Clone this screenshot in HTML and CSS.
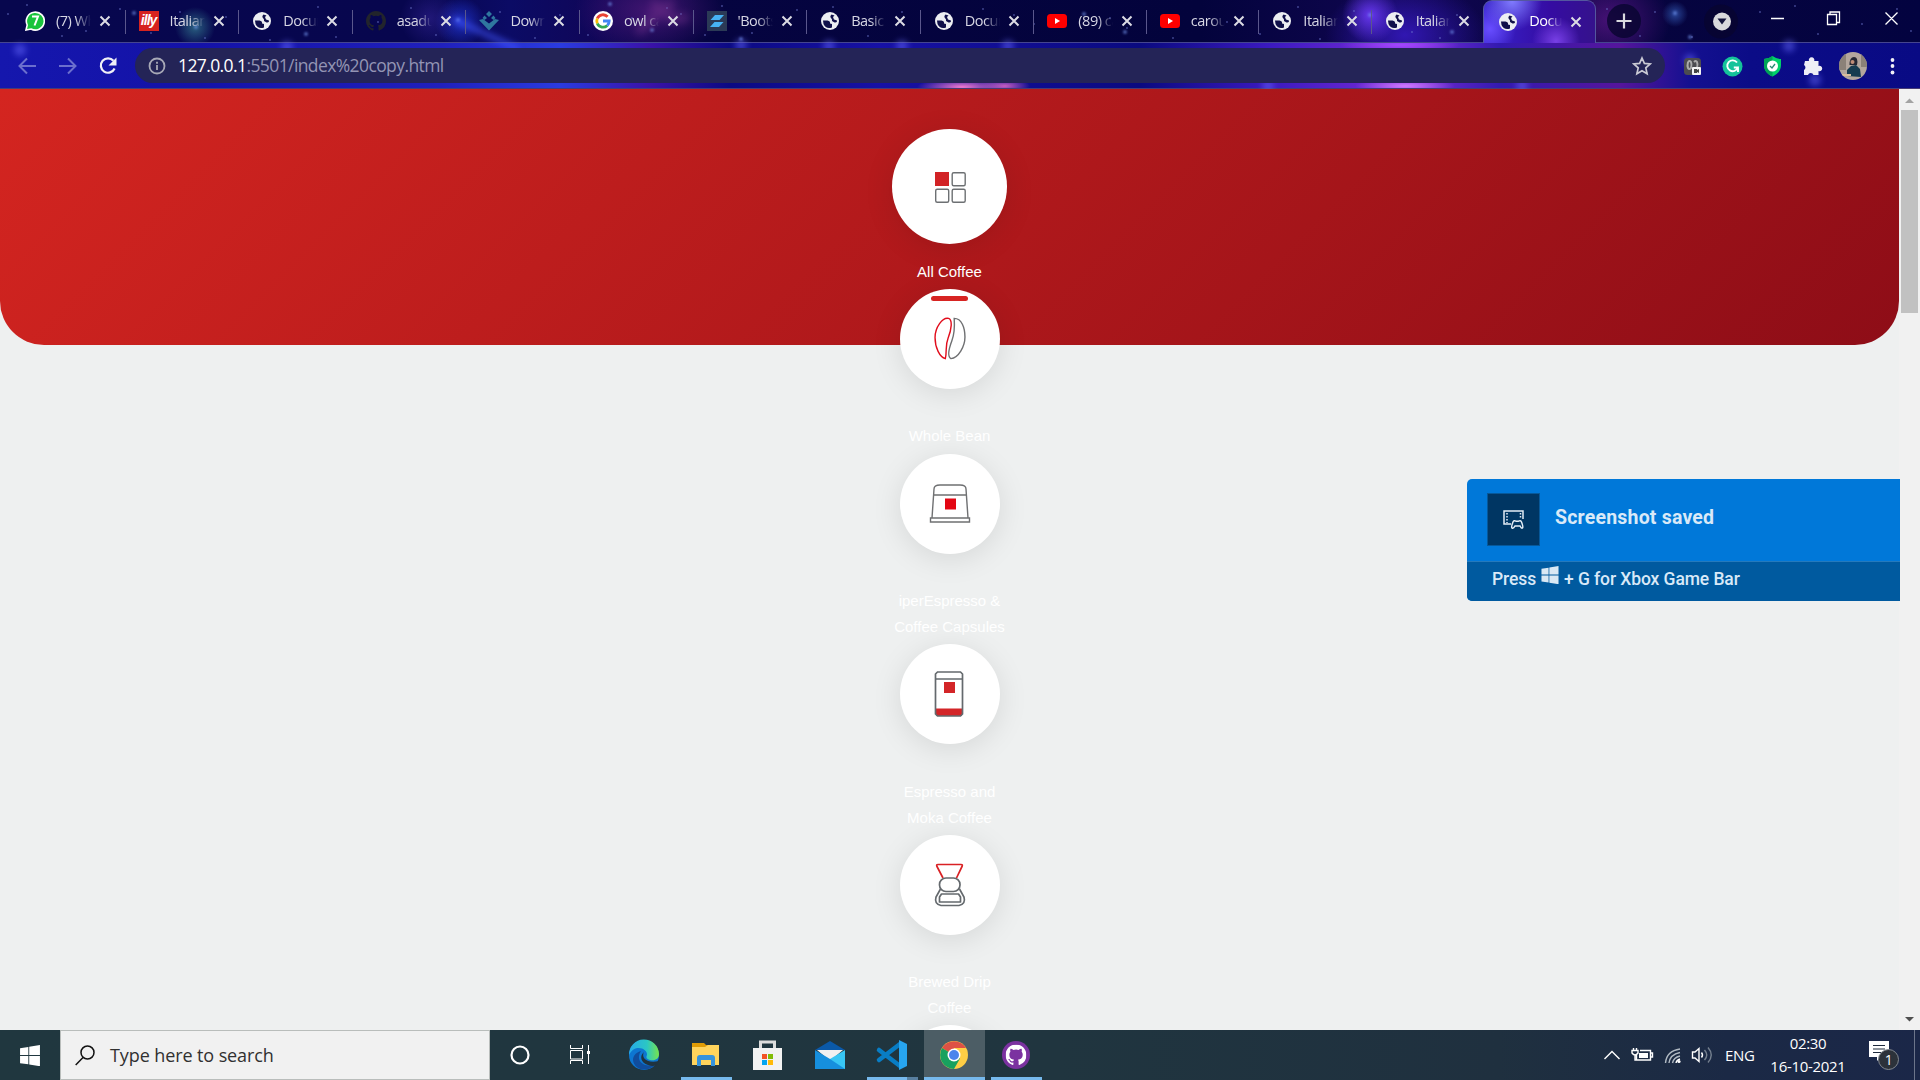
FILE: index.html
```html
<!DOCTYPE html>
<html lang="en">
<head>
<meta charset="utf-8">
<title>Document</title>
<link rel="stylesheet" href="styles.css">
</head>
<body>
<svg class="defs" aria-hidden="true">
  <symbol id="globe" viewBox="0 0 20 20"><circle cx="10" cy="10" r="9" fill="#eceef2"/><path d="M3 9.500h4.500q3 .5 2.500 3l2 .5v3.500q-6 2-8.500-3.500zM11.500 3.500q-2 2-.5 3.500t1 3l2.500 1.500q3 .5 2.500-2l-3-1-1-2.500 1.500-1.500z" fill="#10104a"/></symbol>
  <symbol id="x" viewBox="0 0 12 12"><path d="M1.500 1.500l9 9m0-9l-9 9" stroke="#dcdce4" stroke-width="2" fill="none"/></symbol>
  <symbol id="yt" viewBox="0 0 20 20"><rect y="3" width="20" height="14" rx="3.500" fill="#f00"/><path d="M8 7l5 3-5 3z" fill="#fff"/></symbol>
  <symbol id="cat" viewBox="0 0 16 16"><path d="M8 0C3.580 0 0 3.580 0 8c0 3.540 2.290 6.530 5.470 7.590.4.070.550-.170.550-.380 0-.190-.010-.820-.010-1.490-2.010.370-2.530-.490-2.690-.940-.090-.230-.480-.940-.820-1.130-.280-.150-.680-.520-.010-.530.630-.010 1.080.580 1.230.820.720 1.210 1.870.870 2.330.660.070-.520.280-.870.510-1.070-1.780-.2-3.640-.890-3.640-3.950 0-.870.310-1.590.820-2.150-.080-.2-.360-1.020.080-2.120 0 0 .670-.210 2.200.820a7.500 7.500 0 014 0c1.530-1.040 2.200-.820 2.200-.820.440 1.100.160 1.920.080 2.120.510.560.820 1.270.820 2.150 0 3.070-1.870 3.750-3.650 3.950.290.250.540.730.540 1.480 0 1.070-.010 1.930-.010 2.200 0 .210.150.460.550.380A8 8 0 0016 8c0-4.420-3.580-8-8-8z"/></symbol>
  <symbol id="win" viewBox="0 0 18 19"><path d="M0 3l7.500-1.200V9H0zM8.300 1.600L18 0v9H8.300zM0 10h7.500v7.500L0 16.400zM8.300 10H18v9.200L8.300 17.700z"/></symbol>
</svg>

<header class="chrome">
  <svg class="sky" width="1920" height="89" aria-hidden="true">
    <path class="s1" d="M8 14h0M27 5h0M62 36h0M86 31h0M120 9h0M151 33h0M180 12h0M205 38h0M226 17h0M270 40h0M318 7h0M336 37h0M378 22h0M411 8h0M436 35h0M500 12h0M535 38h0M560 15h0M588 35h0M632 18h0M667 8h0M681 14h0M705 35h0M722 6h0M752 33h0M797 10h0M833 7h0M868 36h0M902 12h0M948 22h0M983 9h0M1014 15h0M1034 24h0M1110 18h0M1127 28h0M1173 38h0M1227 22h0M1260 34h0M1298 7h0M1320 39h0M1354 11h0M1387 20h0M1412 32h0M1440 38h0M1457 15h0M1503 34h0M1545 21h0M1607 9h0M1640 36h0M1655 12h0M1692 37h0M1720 20h0M1760 12h0M1795 6h0M1818 34h0M1862 24h0M1897 9h0M1911 31h0"/>
    <path class="s2" d="M134 13h0M306 34h0M196 27h0M458 20h0M610 4h0M741 39h0M1084 14h0M1370 15h0M1452 32h0M1675 13h0M1690 37h0M1125 32h0M652 30h0"/>
    <path class="glow" d="M741 45h0M829 46h0M902 46h0M20 50h0M287 47h0M1008 46h0M1789 46h0M1268 86h0M1522 86h0M1815 80h0M1690 60h0"/>
    <path class="nebula" d="M655 4q15 18 30 14M640 30q14-14 30-26"/>
    <path class="comet" d="M455 20L516 48"/>
  </svg>
  <nav class="tabs">
    <div class="tab"><svg class="fav" viewBox="0 0 20 20"><path d="M1 19l1.200-5A9 9 0 1 1 6 18z" fill="#19c43c" stroke="#fff" stroke-width="1.600"/><path d="M7 5.500h6L9.500 14.500" fill="none" stroke="#fff" stroke-width="2"/></svg><span>(7) WhatsApp</span><svg class="close"><use href="#x"/></svg></div>
    <div class="tab"><b class="fav illy">illy</b><span>Italian</span><svg class="close"><use href="#x"/></svg></div>
    <div class="tab"><svg class="fav"><use href="#globe"/></svg><span>Document</span><svg class="close"><use href="#x"/></svg></div>
    <div class="tab"><svg class="fav" fill="#22242c"><use href="#cat"/></svg><span>asadullah</span><svg class="close"><use href="#x"/></svg></div>
    <div class="tab"><svg class="fav" viewBox="0 0 20 20" fill="#2f779f"><path d="M10 0l3 3-3 3-3-3zM5.500 4.500L8 7 5.500 9 3.500 7zM14.500 4.500L12 7l2.500 2 2-2zM0 9l4-1 6 4.500L16 8l4 1-10 10.500z"/></svg><span>Download</span><svg class="close"><use href="#x"/></svg></div>
    <div class="tab"><svg class="fav" viewBox="0 0 20 20"><circle cx="10" cy="10" r="10" fill="#fff"/><g fill="none" stroke-width="2.800"><path d="M4.300 7.500A6.200 6.200 0 0 1 14.600 5.800" stroke="#ea4335"/><path d="M4.300 12.500a6.200 6.200 0 0 1 0-5" stroke="#fbbc05"/><path d="M14.300 14.400A6.200 6.200 0 0 1 4.300 12.500" stroke="#34a853"/><path d="M10 10h6.200a6 6 0 0 1-1.900 4.400" stroke="#4285f4"/></g></svg><span>owl carousel</span><svg class="close"><use href="#x"/></svg></div>
    <div class="tab"><svg class="fav" viewBox="0 0 20 20"><path fill="#2b3a56" d="M0 0h20v20H0z"/><path fill="#47b2f4" d="M8 4h9l-4.500 5H3.500zM7.500 11h9L12 16H3z"/></svg><span>'Bootstrap</span><svg class="close"><use href="#x"/></svg></div>
    <div class="tab"><svg class="fav"><use href="#globe"/></svg><span>Basic Demo</span><svg class="close"><use href="#x"/></svg></div>
    <div class="tab"><svg class="fav"><use href="#globe"/></svg><span>Document</span><svg class="close"><use href="#x"/></svg></div>
    <div class="tab"><svg class="fav"><use href="#yt"/></svg><span>(89) carousel</span><svg class="close"><use href="#x"/></svg></div>
    <div class="tab"><svg class="fav"><use href="#yt"/></svg><span>carousel</span><svg class="close"><use href="#x"/></svg></div>
    <div class="tab"><svg class="fav"><use href="#globe"/></svg><span>Italian</span><svg class="close"><use href="#x"/></svg></div>
    <div class="tab"><svg class="fav"><use href="#globe"/></svg><span>Italian</span><svg class="close"><use href="#x"/></svg></div>
    <div class="tab active"><svg class="fav"><use href="#globe"/></svg><span>Document</span><svg class="close"><use href="#x"/></svg></div>
    <svg class="window-tools" width="324" height="42" viewBox="1596 0 324 42" fill="none">
      <circle cx="1624" cy="21" r="17" fill="#07052f" fill-opacity=".8"/><path d="M1616.500 21h15M1624 13.500v15" stroke="#d9d9df" stroke-width="2.200"/>
      <circle cx="1721" cy="21.500" r="17" fill="#07052f" fill-opacity=".8"/><circle cx="1722" cy="21.500" r="9" fill="#d9d9dc"/><path d="M1717.500 18.500h9l-4.500 6z" fill="#15153c"/>
      <path d="M1771 18.500h13M1827.500 14.500h9v10h-9zM1830 14v-2h9.500v10.500h-2.500M1885.500 12.500l12 12m0-12l-12 12" stroke="#fff" stroke-width="1.300"/>
    </svg>
  </nav>
  <div class="toolbar">
    <svg class="nav-icons" width="135" height="44" viewBox="0 43 135 44" fill="none">
      <path d="M36 65H20m7-7.500L19.500 65l7.500 7.500M59 65h16m-7-7.500l7.500 7.500-7.500 7.500" stroke="#6b6fce" stroke-width="2"/>
      <path d="M113.500 59.800a7.200 7.200 0 1 0 1.100 7.700" stroke="#f0f0f6" stroke-width="2.200"/><path d="M116.500 56.500v8h-8z" fill="#f0f0f6"/>
    </svg>
    <div class="address">
      <svg width="18" height="18" viewBox="0 0 18 18" fill="none" stroke="#a7a8b6" stroke-width="1.800"><circle cx="9" cy="9" r="7.500"/><path d="M9 8v5M9 4.800v1.900"/></svg>
      <div class="url"><em>127.0.0.1</em>:5501/index%20copy.html</div>
      <svg class="star" width="20" height="20" viewBox="0 0 20 20"><path d="M10 2l2.400 5.400 5.800.6-4.400 3.900 1.300 5.800-5.100-3-5.100 3 1.300-5.800L1.800 8l5.800-.6z" fill="none" stroke="#c9c9d4" stroke-width="1.700"/></svg>
    </div>
    <svg class="extensions" width="255" height="44" viewBox="1665 43 255 44">
      <rect x="1684" y="57" width="17" height="17" rx="3.500" fill="#4c4c50"/><path d="M1688 61q2-2 3 0t0 6q-2 2-3 0t0-6m6 0q2-2 3 0t0 6" fill="none" stroke="#aaa" stroke-width="2"/><rect x="1692" y="66" width="9" height="8" rx="1" fill="#f4f4f4"/><path d="M1694 68h3v1l2-1v4l-2-1v1h-3z" fill="#444"/>
      <circle cx="1732.500" cy="65.500" r="10" fill="#15c39a"/><path d="M1737 61.500a5.400 5.400 0 1 0 .8 5h-4m4.200 0v4.500" fill="none" stroke="#fff" stroke-width="1.900"/>
      <path d="M1772.500 55q4 3 8.500 3v6c0 6-4 9.500-8.500 11.500-4.500-2-8.500-5.500-8.500-11.500v-6q4.500 0 8.500-3z" fill="#00d26a"/><path d="M1772.500 55v20.500c-4.500-2-8.500-5.500-8.500-11.500v-6q4.500 0 8.500-3" fill="#00a457"/><circle cx="1772.500" cy="65" r="5.500" fill="#fff"/><path d="M1770 65l2 2 3-4" fill="none" stroke="#298a73" stroke-width="1.300"/>
      <path d="M1805 60h4a2.800 2.800 0 1 1 5.200 0h4.300v5a2.700 2.700 0 1 1 0 5v4h-5a2.900 2.900 0 0 0-5.500 0h-4v-5a2.900 2.900 0 0 0 0-5z" fill="#eeeef6"/>
      <clipPath id="face"><circle cx="1853" cy="65" r="14"/></clipPath><g clip-path="url(#face)"><path fill="#b3a69d" d="M1839 51h28v28h-28z"/><path fill="#8b8178" d="M1839 51h7v18h-7zM1861 53h6v13h-6z"/><path fill="#173c50" d="M1847 75v-6l4-4 5-1 4 4 1 8z"/><path fill="#252733" d="M1849.500 64q0-8 4.500-8t3 8z"/><circle cx="1852.500" cy="61" r="2" fill="#bf8d77"/><path fill="#d9bd9d" d="M1842 73h9v2h-9z"/></g>
      <g fill="#f0f0f6"><circle cx="1892.500" cy="59" r="1.900"/><circle cx="1892.500" cy="65" r="1.900"/><circle cx="1892.500" cy="71.500" r="1.900"/></g>
    </svg>
  </div>
</header>

<div class="viewport">
  <main class="page">
    <section class="hero">
      <div class="item first"><div class="disc"><svg width="31" height="31" viewBox="1 1 31 31" fill="none" stroke="#6d7073" stroke-width="1.400"><path d="M1 1h14v14H1z" fill="#d22326" stroke="none"/><rect x="18.200" y="1.700" width="13" height="13" rx="1.500"/><rect x="1.700" y="18.200" width="13" height="13" rx="1.500"/><rect x="18.200" y="18.200" width="13" height="13" rx="1.500"/></svg></div><p>All Coffee</p></div>
      <div class="item current"><div class="disc"><svg width="32" height="43" viewBox="0 0 34 46" fill="none" stroke-width="1.500"><path d="M15.500 1.500C9 0 1 11 1 22S6 43 12 44.500c2-9-.5-13 3-22S20 3 15.500 1.500z" stroke="#e10c1b"/><path d="M21.500 1.500c8 0 11.500 10 11.500 20S26 44 18 44.500c-4-2-2-11 1-19S22 9 21.500 1.500z" stroke="#6f7072"/></svg></div><p>Whole Bean</p></div>
      <div class="item"><div class="disc"><svg class="capsule" width="42" height="40" viewBox="0 0 42 40" fill="none" stroke="#6f7072" stroke-width="1.400"><path d="M3 35L5 6q0-4 6-4h20q6 0 6 4l2 29M4.500 12h33M1.500 35h39v4h-39z"/><path d="M16 15.500h11v11H16z" fill="#e30613" stroke="none"/></svg></div><p>iperEspresso &amp;<br>Coffee Capsules</p></div>
      <div class="item"><div class="disc"><svg class="tin" width="30" height="48" viewBox="0 0 30 48" fill="none"><path d="M2 38.500h26V46H2zM10 12h11v11H10z" fill="#d32528"/><path d="M3.500 2h23l2 2v40l-2 2h-23l-2-2V4zM2 9h26" stroke="#64696d" stroke-width="1.700"/></svg></div><p>Espresso and<br>Moka Coffee</p></div>
      <div class="item"><div class="disc"><svg width="32" height="44" viewBox="0 0 32 44" fill="none" stroke="#64696d" stroke-width="1.700"><path d="M9 15L3 3.500Q2 1.500 4 1.500h23q2 0 1 2L22.500 15" stroke="#d92124"/><rect x="5.500" y="15" width="20.500" height="13.500" rx="6.500"/><path d="M6.500 26L2 34q-2 7 5 8.500h18q7-1.500 5-8.500l-4.500-8"/><path d="M7.500 31h17l2 3v5H5.500v-5z" stroke-linejoin="round"/></svg></div><p>Brewed Drip<br>Coffee</p></div>
      <div class="item"><div class="disc"></div></div>
    </section>
  </main>
  <aside class="scrollbar"><svg width="21" height="21"><path d="M6 14l4.500-4.500L15 14z" fill="#a3a3a3"/></svg><div class="thumb"></div><svg class="down" width="21" height="21"><path d="M6 8l4.500 4.500L15 8z" fill="#505050"/></svg></aside>
</div>

<div class="toast">
  <div class="toast-main"><div class="toast-icon"><svg width="22" height="20" viewBox="0 0 22 20" fill="none" stroke="#e3edf6" stroke-width="1.500"><path d="M8 14H1V1h19v8"/><path d="M4 3v10M17.500 3v6" stroke-dasharray="1.500 1.500"/><path d="M9 18q-1-1 1-6 1-2 3-.8h2.500q2-1.200 3 .8 2 5 1 6-1 .8-2.500-2h-5q-1.500 2.800-3 2z"/></svg></div><strong>Screenshot saved</strong></div>
  <div class="toast-foot"><span>Press</span><svg width="18" height="18" fill="#d9e8f4"><use href="#win"/></svg><span>+ G for Xbox Game Bar</span></div>
</div>

<footer class="taskbar">
  <div class="start"><svg width="20" height="21" fill="#fff"><use href="#win"/></svg></div>
  <div class="search"><svg width="20" height="21" viewBox="0 0 20 21" fill="none" stroke="#111" stroke-width="1.500"><circle cx="12.500" cy="7.500" r="6.500"/><path d="M8 12.500L.7 20"/></svg><span>Type here to search</span></div>
  <svg class="apps" width="570" height="50" viewBox="490 1030 570 50" fill="none">
    <path fill="#4c5d65" d="M924 1030h61v50h-61z"/>
    <path fill="#76b9ed" d="M681 1077h51v3h-51zM867 1077h40v3h-40zM924 1077h61v3h-61zM991 1077h51v3h-51z"/><path fill="#587f9f" d="M907 1077h11v3h-11z"/>
    <circle cx="520" cy="1055" r="8.500" stroke="#fff" stroke-width="2.200"/>
    <path d="M570.500 1045v3.500h12v-3.500M570.500 1064v-3.500h12v3.500M570.500 1050.500h12v8.500h-12zM588.500 1045v19" stroke="#fff"/><path d="M587 1051h3v3h-3z" fill="#fff"/>
    <g><defs><linearGradient id="eg"><stop stop-color="#27a9e8"/><stop offset=".6" stop-color="#2bc7c4"/><stop offset="1" stop-color="#78e34b"/></linearGradient></defs><circle cx="644" cy="1055" r="15" fill="#0d76d1"/><path d="M629 1055a15 15 0 0 1 30-1c0 5-4 7-9 6-4-1-4-3-3-5 1-6-12-12-18 0z" fill="url(#eg)"/><path d="M641 1051c-6 9 2 17 14 14-8 8-21 5-22-5 0-5 4-8 8-9z" fill="#104d9d"/><path d="M644 1052c-3 5 2 12 15 9l-2 4q-5 2-9 0c-7-2-9-9-4-13z" fill="#20333f"/></g>
    <path fill="#e09c05" d="M692 1043h12l2 2h13v10h-27z"/><path fill="#ffd45c" d="M692 1047h13l3-2h11v20h-27z"/><path fill="#3693db" d="M697 1066v-8q0-3 3-3h12q3 0 3 3v8h-4v-6h-10v6z"/>
    <path d="M760.500 1048v-6h14v6" stroke="#ddd" stroke-width="3"/><path fill="#f2f2f2" d="M753 1048h29v22h-29z"/><path fill="#f35325" d="M762 1054h5v5h-5z"/><path fill="#81bc06" d="M768 1054h5v5h-5z"/><path fill="#05a6f0" d="M762 1060h5v5h-5z"/><path fill="#ffba08" d="M768 1060h5v5h-5z"/>
    <path fill="#0b59a8" d="M815 1050l15-9 15 9z"/><path fill="#f1f1f1" d="M817 1050h26l-13 11z"/><path fill="#168fdd" d="M815 1050l15 9v10h-15z"/><path fill="#38c6f4" d="M845 1050l-15 9v10h15z"/><path fill="#168fdd" d="M815 1069l15-10 15 10z"/>
    <path d="M879 1050l21 16M879 1060l21-16" stroke="#087dc5" stroke-width="4.500" stroke-linecap="round"/><path fill="#27a5f0" d="M899 1040l8 4v22l-8 4z"/>
    <circle cx="954" cy="1055" r="14" fill="#ffce45"/><path fill="#de5145" d="M954 1055l-12-7a14 14 0 0 1 24.100 0H954z"/><path fill="#19a15f" d="M954 1055l6 3.500-6 10.500a14 14 0 0 1-12-21z"/><circle cx="954" cy="1055" r="6.500" fill="#fff"/><circle cx="954" cy="1055" r="5" fill="#4a85ec"/>
    <circle cx="1016" cy="1055" r="14" fill="#7b32a0"/><svg x="1005.500" y="1044.500" width="21" height="21" fill="#fff"><use href="#cat"/></svg>
  </svg>
  <div class="tray">
    <svg width="120" height="50" viewBox="1600 1030 120 50" fill="none" stroke="#fff" stroke-width="1.400">
      <path d="M1604.500 1059l7.500-7.500 7.500 7.500"/><path d="M1640 1050.500h10.500v9.500h-14v-5M1651 1053h1.500v4h-1.500M1632 1050.500h6v2.500q-3 4-6 0zM1633.500 1048v3M1636.500 1048v3M1635 1055v5h2"/><path fill="#fff" stroke="none" d="M1639 1053h9v5h-9z"/>
      <path d="M1665.500 1063q1-12 14.500-14M1669 1063q1-8.500 11-10.500M1672.500 1063q1-5.500 7.500-7" stroke="#b1bac3"/><path d="M1676 1063q.5-3 4-4" stroke="#fff"/><circle cx="1679" cy="1061.500" r="1.600" fill="#fff" stroke="none"/>
      <path d="M1692.500 1052h2.500l4-3.500v13l-4-3.500h-2.500zM1701.500 1052.500q2 2.500 0 5"/><path d="M1704.500 1050q4.500 5 0 10M1708 1047.500q6.500 7.500 0 15" stroke="#75808f"/>
    </svg>
    <span class="lang">ENG</span>
    <div class="clock"><span>02:30</span><span>16-10-2021</span></div>
    <div class="notice"><svg width="20" height="20" viewBox="0 0 20 20"><path fill="#fff" d="M0 0h20v16h-8l-4 4v-4H0z"/><path d="M4 4.500h12M4 8h12M4 11.500h8" stroke="#1e2a3d" stroke-width="1.200"/></svg><b>1</b></div>
    <i class="peek"></i>
  </div>
</footer>
</body>
</html>
```
FILE: styles.css
```css
* { box-sizing: border-box; }
body { margin: 0; width: 1920px; height: 1080px; overflow: hidden; display: flex; flex-direction: column; font-family: "Open Sans", "Noto Sans", sans-serif; background: #eef0f0; }
svg { display: block; flex: none; }
.defs { position: absolute; width: 0; height: 0; }

.chrome { position: relative; height: 89px; flex: none; border-bottom: 1px solid #463c76;
  background:
    radial-gradient(ellipse 50px 8px at 1405px 86px, #cf7aff, transparent),
    radial-gradient(ellipse 45px 9px at 962px 87px, #f07ad0, transparent),
    radial-gradient(ellipse 25px 8px at 1005px 86px, #c55dc0, transparent),
    radial-gradient(ellipse 60px 8px at 1400px 45px, #a347ff, transparent),
    linear-gradient(90deg, #1517ad 0, #1412a8 200px, #2020bd 440px, #2a3be0 560px, #3a12a8 650px, #0b0a83 730px, #1711a5 880px, #0a0a80 1140px, #3b1ac0 1270px, #7b2cd8 1410px, #331ab0 1500px, #55159c 1620px, #141090 1690px, #0b0c87 1750px, #090a84 1920px); }
.sky { position: absolute; inset: 0; z-index: 1; pointer-events: none; }
.sky path { fill: none; stroke-linecap: round; }
.s1 { stroke: #6f7ad0; stroke-width: 1.800px; opacity: .6; }
.s2 { stroke: #7090e8; stroke-width: 4px; opacity: .65; filter: blur(.8px); }
.glow { stroke: #6a6cff; stroke-width: 12px; opacity: .5; filter: blur(3px); }
.nebula { stroke: #8a3c9a; stroke-width: 9px; opacity: .4; filter: blur(4px); }
.comet { stroke: #4356ff; stroke-width: 6px; opacity: .6; filter: blur(3px); }

.tabs { height: 43px; display: flex; padding-left: 11px; border-bottom: 1px solid #45458f;
  background:
    radial-gradient(circle 20px at 195px 27px, #3a8a98aa, transparent),
    radial-gradient(circle 30px at 430px 18px, #35259888, transparent),
    radial-gradient(circle 25px at 460px 22px, #2a45ff99, transparent),
    radial-gradient(ellipse 75px 45px at 650px 10px, #5b1d82aa, transparent),
    radial-gradient(circle 28px at 1370px 15px, #713dffdd, transparent),
    radial-gradient(ellipse 80px 55px at 1405px 35px, #391bcacc, transparent),
    radial-gradient(ellipse 60px 50px at 1610px 20px, #65188faa, transparent),
    radial-gradient(circle 13px at 1675px 14px, #284497, transparent),
    linear-gradient(90deg, #07074e 0, #07064e 420px, #0b0b65 510px, #100658 600px, #050440 700px, #03033c 1200px, #100650 1400px, #06043f 1640px, #030340 1920px); }
.tab { position: relative; z-index: 2; width: 113.600px; height: 42px; flex: none; display: flex; align-items: center; padding: 0 13px 0 14px; }
.tab:nth-child(n+10) { width: 112.500px; }
.tab::after { content: ""; position: absolute; right: -1px; top: 10px; width: 1px; height: 24px; background: #5a578c; }
.tab:nth-child(13)::after, .tab.active::after { display: none; }
.fav { width: 20px; height: 20px; flex: none; }
.illy { background: #d6231f; color: #fff; font: italic bold 14px/19px "Liberation Sans", sans-serif; text-align: center; letter-spacing: -1px; overflow: hidden; }
.tab span { width: 35px; margin-left: 11px; color: #d7d7e4; font-size: 14.500px; line-height: 20px; margin-bottom: 1px; letter-spacing: -.5px; white-space: nowrap; overflow: hidden; -webkit-mask: linear-gradient(90deg, #000 55%, transparent); mask: linear-gradient(90deg, #000 55%, transparent); }
.close { width: 12px; height: 12px; margin-left: 8px; }
.tab.active { width: 113px; height: 43px; padding-bottom: 1px; border: 1px solid #54579f; border-bottom: 0; border-radius: 9px 9px 0 0; background: radial-gradient(circle 24px at 72px 40px, #7840e6, transparent), radial-gradient(circle 30px at 28px 0, #817cff, transparent), radial-gradient(circle 26px at 6px 28px, #684dff, transparent), linear-gradient(90deg, #3723cc, #350ca2 60%, #35128c); }
.active span { color: #fff; }
.window-tools { position: relative; z-index: 2; }

.toolbar { position: relative; z-index: 2; height: 45px; display: flex; align-items: center; }
.address { width: 1530px; height: 35px; border-radius: 18px; padding: 0 13px; display: flex; align-items: center; background: #242457; }
.url { margin: 0 0 2px 12px; flex: 1; color: #9394b4; font-size: 17.500px; letter-spacing: -.6px; white-space: nowrap; }
.url em { font-style: normal; color: #fff; }

.viewport { height: 941px; flex: none; display: flex; overflow: hidden; }
.page { width: 1899px; background: #eef0f0; }
.hero { height: 256px; padding-top: 40px; border-radius: 0 0 44px 44px; background: linear-gradient(135deg, #d42520 0, #8e0d17 100%); display: flex; flex-direction: column; align-items: center; }
.item { position: relative; width: 150px; flex: none; display: flex; flex-direction: column; align-items: center; padding-bottom: 4px; }
.disc { width: 100px; height: 100px; border-radius: 50%; background: #fff; display: flex; align-items: center; justify-content: center; box-shadow: 0 5px 30px rgba(0,0,0,.1); }
.first .disc { width: 115px; height: 115px; padding: 1px 0 0 1px; }
.capsule { margin-top: -2px; }
.tin { margin-left: -2px; }
.item p { margin: 34.700px 0 0; padding-bottom: .3px; color: #fff; font: 15px/25.800px "Liberation Sans", Arial, sans-serif; text-align: center; }
.first p { margin-top: 15px; padding: 0; }
.current::before { content: ""; position: absolute; top: 7px; width: 37px; height: 5px; border-radius: 3px; background: #d72422; }
.scrollbar { width: 21px; background: #f1f1f1; display: flex; flex-direction: column; align-items: center; }
.thumb { width: 17px; height: 203px; background: #c1c1c1; }
.down { margin-top: auto; }

.toast { position: absolute; left: 1467px; top: 479px; width: 433px; height: 122px; border-radius: 5px 0 0 5px; overflow: hidden; background: #0078d9; color: #d9e9f8; font-family: Roboto, sans-serif; }
.toast-main { height: 82px; display: flex; align-items: center; gap: 15px; padding: 0 0 1px 20px; }
.toast-icon { width: 53px; height: 53px; background: #003663; border: 1px solid #075899; display: grid; place-items: center; }
.toast strong { font-size: 19.500px; letter-spacing: .2px; margin-bottom: 4px; }
.toast-foot { height: 40px; background: #005a9f; border-top: 1px solid #257abc; display: flex; align-items: center; padding: 0 0 6px 25px; gap: 5px; font-size: 17.500px; font-weight: 500; letter-spacing: -.1px; white-space: nowrap; }
.toast-foot svg { margin-bottom: 7px; }

.taskbar { position: relative; height: 50px; flex: none; display: flex; background: linear-gradient(90deg, #20373f 0, #20353f 55%, #1f303f 78%, #1b2945 90%, #1b2748 100%); color: #fff; }
.start { width: 60px; display: grid; place-items: center; }
.search { width: 430px; background: #f1f1f1; border: 1px solid #b9bdbb; display: flex; align-items: center; padding-left: 14px; gap: 15px; color: #303030; font-size: 18px; }
.search span { letter-spacing: -.1px; }
.tray { flex: 1; display: flex; justify-content: flex-end; align-items: center; font-size: 15px; letter-spacing: -.3px; }
.lang { width: 50px; padding-left: 5px; }
.clock { width: 76px; display: flex; flex-direction: column; align-items: center; line-height: 23px; white-space: nowrap; }
.notice { position: relative; width: 31px; height: 31px; margin: 0 14px 0 23px; padding-top: 1px; }
.notice b { position: absolute; left: 9px; top: 9px; width: 21px; height: 21px; border: 1px solid #838990; border-radius: 50%; background: #2c323a; font: 14px/19px "Open Sans", sans-serif; text-align: center; }
.peek { width: 6px; height: 50px; border-left: 1px solid #6c758a; }
```
